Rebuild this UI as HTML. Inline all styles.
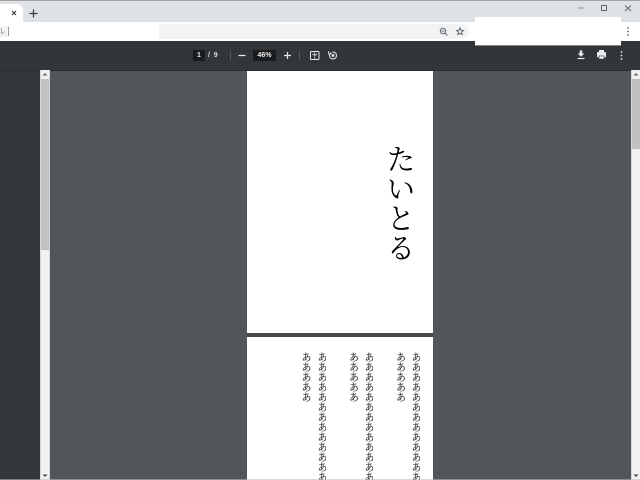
<!DOCTYPE html>
<html><head><meta charset="utf-8"><style>
html,body{margin:0;padding:0;width:640px;height:480px;overflow:hidden;background:#525659}
div{position:absolute}
#root{left:0;top:0;width:640px;height:480px;overflow:hidden;background:#525659}
.v{writing-mode:vertical-rl;font-family:"Liberation Serif","Noto Serif CJK JP",serif;color:#000;white-space:nowrap}
.a{top:351.500px;width:12px;font-size:10px;line-height:12px;letter-spacing:0;color:#2a2a2a;-webkit-text-stroke:.2px #444}
.sb{background:#f1f1f1}.th{background:#c1c1c1}
</style></head><body><div id="root">
<div style="left:0;top:0;width:640px;height:1px;background:#a3a3a3"></div>
<div style="left:0;top:1px;width:640px;height:21px;background:#dee1e6"></div>
<div style="left:0;top:4px;width:23px;height:18px;background:#fff;border-radius:0 6px 0 0"></div>
<svg style="position:absolute;left:0;top:0" width="640" height="70" fill="none">
<path d="M12 11l4 4M16 11l-4 4" stroke="#3c4043" stroke-width="1.2"/>
<path d="M33.500 9.500v8M29.500 13.500h8" stroke="#3c4043" stroke-width="1.300"/>
<path d="M578 8h6" stroke="#999" stroke-width="1"/>
<rect x="601.500" y="5.500" width="5" height="5" stroke="#666"/>
<path d="M625 5.500l6 5.500M631 5.500l-6 5.500" stroke="#666"/>
</svg>
<div style="left:0;top:22px;width:640px;height:19px;background:#fff"></div>
<div style="left:0;top:41px;width:640px;height:29px;background:#323639"></div>
<div style="left:159px;top:24px;width:310px;height:15px;background:#f1f3f4;border-radius:0 8px 8px 0"></div>
<div style="left:0;top:26px;width:9px;height:11px;background:#f1f3f4;overflow:hidden"><div style="left:-3px;top:0;color:#888;font:8px/11px 'Liberation Sans','Noto Sans CJK JP',sans-serif;white-space:nowrap">ル</div></div>
<div style="left:8px;top:27px;width:1px;height:9px;background:#999"></div>
<svg style="position:absolute;left:0;top:0" width="640" height="70" fill="none">
<circle cx="443" cy="31" r="2.700" stroke="#5f6368"/><path d="M445 33l2.500 2.500M441.500 31h3" stroke="#5f6368"/>
<path d="M460 28l1 2.200 2.400.3-1.800 1.600.5 2.400-2.100-1.200-2.100 1.200.5-2.400-1.800-1.600 2.400-.3z" stroke="#5f6368"/>
<circle cx="628" cy="28" r=".9" fill="#5f6368"/><circle cx="628" cy="31.500" r=".9" fill="#5f6368"/><circle cx="628" cy="35" r=".9" fill="#5f6368"/>
</svg>
<div style="left:475px;top:17px;width:146px;height:28px;background:#fff;border-bottom:1px solid #8a8a8a"></div>
<div style="left:193px;top:50px;width:12px;height:11px;background:#191b1c"></div>
<div style="left:193px;top:50px;width:12px;height:11px;color:#eee;font:bold 7px/11px 'Liberation Sans',sans-serif;text-align:center">1</div>
<div style="left:206px;top:50px;width:14px;color:#ddd;font:bold 7px/11px 'Liberation Sans',sans-serif;white-space:pre"> /  9</div>
<div style="left:230px;top:51px;width:1px;height:9px;background:#55595c"></div>
<div style="left:253px;top:50px;width:23px;height:11px;background:#191b1c;color:#eee;font:bold 7px/11px 'Liberation Sans',sans-serif;text-align:center">46%</div>
<div style="left:299px;top:51px;width:1px;height:9px;background:#55595c"></div>
<svg style="position:absolute;left:0;top:41px" width="640" height="29" fill="none">
<path d="M238.500 14.500h7M284 14.500h7M287.500 11v7" stroke="#e8eaed" stroke-width="1.200"/>
<rect x="310.500" y="10.500" width="8.500" height="8" rx="1" stroke="#e8eaed"/>
<path d="M314.700 11.500v2M314.700 15.500v2M312.500 13l2.200 1.500 2.200-1.500" stroke="#e8eaed" stroke-width=".8"/>
<circle cx="333" cy="14.500" r="3.500" stroke="#e8eaed"/><rect x="331.700" y="13.200" width="2.600" height="2.600" fill="#e8eaed"/><path d="M329 11h3v-1.500" stroke="#323639" stroke-width="1"/><path d="M328.500 10v3h3" stroke="#e8eaed" stroke-width=".8"/>
<path d="M579.700 9.500h2.600v3h2L581 15.700l-3.300-3.200h2z" fill="#e8eaed"/><path d="M577.500 17.500h7" stroke="#e8eaed" stroke-width="1.200"/>
<rect x="597" y="11" width="9" height="5.500" rx="1" fill="#e8eaed"/><rect x="599" y="9" width="5" height="2" fill="#e8eaed"/><rect x="599" y="15" width="5" height="3" fill="#fff" stroke="#323639" stroke-width=".6"/>
<circle cx="621.500" cy="11" r=".9" fill="#e8eaed"/><circle cx="621.500" cy="14.500" r=".9" fill="#e8eaed"/><circle cx="621.500" cy="18" r=".9" fill="#e8eaed"/>
</svg>
<div style="left:0;top:70px;width:40px;height:410px;background:#32373a"></div>
<div style="left:0;top:70px;width:640px;height:1px;background:#2a2d30"></div>
<div class="sb" style="left:41px;top:70px;width:8px;height:410px"></div>
<div style="left:40px;top:70px;width:1px;height:410px;background:#d8d8d8"></div>
<div style="left:49px;top:70px;width:1px;height:410px;background:#d8d8d8"></div>
<div class="th" style="left:41px;top:79px;width:8px;height:171px"></div>
<div class="sb" style="left:632px;top:70px;width:8px;height:410px"></div>
<div style="left:631px;top:70px;width:1px;height:410px;background:#d8d8d8"></div>
<div class="th" style="left:632px;top:79px;width:8px;height:70px"></div>
<svg style="position:absolute;left:0;top:0" width="640" height="480">
<path d="M45 473l-2.500-2.500h5zM636 473l-2.500-2.500h5z" fill="#444" transform="translate(0 4)"/>
<path d="M45 73l-2.500 2.500h5zM636 73l-2.500 2.500h5z" fill="#666"/>
</svg>
<div style="left:247px;top:71px;width:186px;height:262px;background:#fff"></div>
<div style="left:247px;top:333px;width:186px;height:4px;background:#46494b"></div>
<div style="left:247px;top:337px;width:186px;height:143px;background:#fff"></div>
<div class="v" style="left:382px;top:144px;width:32px;font-size:29.500px;line-height:32px">たいとる</div>
<div class="v a" style="left:298px">あああああ</div>
<div class="v a" style="left:314px;height:128.500px;overflow:hidden">あああああああああああああ</div>
<div class="v a" style="left:345.500px">あああああ</div>
<div class="v a" style="left:361px;height:128.500px;overflow:hidden">あああああああああああああ</div>
<div class="v a" style="left:392.500px">あああああ</div>
<div class="v a" style="left:408px;height:128.500px;overflow:hidden">あああああああああああああ</div>
<div style="left:0;top:479px;width:640px;height:1px;background:rgba(190,190,190,.55)"></div>
</div></body></html>
